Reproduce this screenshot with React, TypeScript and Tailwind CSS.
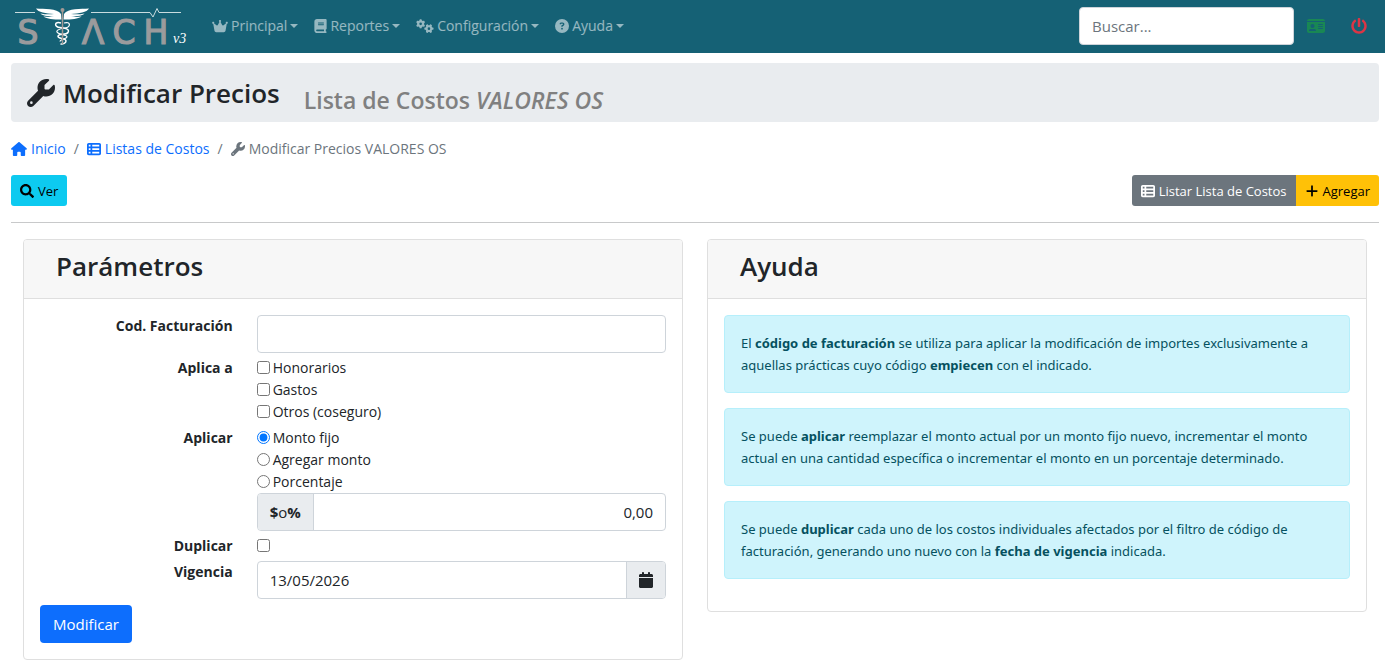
import { useState } from "react";
import type { ReactNode } from "react";
import type { IconType } from "react-icons";
import { FaPowerOff, FaSearch } from "react-icons/fa";
import {
  FaBook, FaCalendar, FaCircleQuestion, FaCrown, FaGears, FaHouse, FaIdCard,
  FaPlus, FaTableList, FaWrench,
} from "react-icons/fa6";

const navItems: { label: string; icon: IconType; size: string }[] = [
  { label: "Principal",     icon: FaCrown,          size: "h-3.5 w-4"      },
  { label: "Reportes",      icon: FaBook,           size: "h-3.5 w-[13px]" },
  { label: "Configuración", icon: FaGears,          size: "h-3.5 w-[18px]" },
  { label: "Ayuda",         icon: FaCircleQuestion, size: "h-3.5 w-3.5"    },
];

const targets = ["Honorarios", "Gastos", "Otros (coseguro)"];
const modes = ["Monto fijo", "Agregar monto", "Porcentaje"];

function Logo() {
  return (
    <svg width="176" height="53" viewBox="12 0 176 53" className="overflow-visible" role="img" aria-label="STACH v3">
      <g stroke="#c9dcdf" strokeWidth="1" fill="none">
        <path d="M15 12.500H35" />
        <path d="M91 12.500H150L153 17L157 8.500L159 12.500H181" />
      </g>
      {/* wings */}
      <g fill="#fff">
        <path d="M36 8.500C44 9 57 8 61 14L61.500 19.500C52 20 45 18 43.500 16.500C47 17 51 17 54 16.500C47 16.500 42 15.500 40.500 13.500C45 14.500 50 14.500 54 14C46 13.500 38 12.500 36 8.500Z" />
        <path d="M89 8.500C81 9 68 8 64 14L63.500 19.500C73 20 80 18 81.500 16.500C78 17 74 17 71 16.500C78 16.500 83 15.500 84.500 13.500C80 14.500 75 14.500 71 14C79 13.500 87 12.500 89 8.500Z" />
      </g>
      {/* snakes and staff */}
      <path d="M61 23C54 21 54 27 60 27.500C65 28 70 29 68 32.500C66 35.500 58 33 58 36.500C58 39 66 38 66 41C66 43 63 44.500 60.500 44" stroke="#fff" strokeWidth="1.500" fill="none" />
      <path d="M64 23C71 21 71 27 65 28C58 29 55 31 58 33C61 35 67 34.500 67 37C67 39 60 39 60 41.500" stroke="#fff" strokeWidth="1.200" fill="none" />
      <path d="M62.500 11V44" stroke="#a39a96" strokeWidth="1.500" />
      <circle cx="62.500" cy="10" r="2" fill="#a39a96" />
      <g fill="#9b9b9d" stroke="#9b9b9d" strokeWidth="1.200" fontFamily="'DejaVu Sans', sans-serif" fontSize="33" textAnchor="middle">
        <text x="28" y="44">S</text>
        <text x="93" y="44">Λ</text>
        <text x="124" y="44">C</text>
        <text x="156" y="44">H</text>
      </g>
      <text x="173" y="43" fill="#fff" fontFamily="'Liberation Serif', serif" fontSize="14" fontStyle="italic">v3</text>
    </svg>
  );
}

function Row({ label, htmlFor, children }: { label: string; htmlFor?: string; children: ReactNode }) {
  const cls = "w-1/3 shrink-0 px-3 text-right font-bold";
  return (
    <div className="-mx-3 flex">
      {htmlFor ? <label htmlFor={htmlFor} className={cls}>{label}</label> : <span className={cls}>{label}</span>}
      <div className="min-w-0 flex-1 px-3">{children}</div>
    </div>
  );
}

function Card({ title, children, className }: { title: string; children: ReactNode; className: string }) {
  return (
    <section className="min-w-0 flex-1 overflow-hidden rounded border border-[#dfdfdf] bg-white">
      <h2 className="border-b border-[#dfdfdf] bg-[#f7f7f7] pt-2 pb-3.5 pl-8 text-[26px] leading-9 font-semibold">{title}</h2>
      <div className={className}>{children}</div>
    </section>
  );
}

function Alert({ children }: { children: ReactNode }) {
  return (
    <p className="rounded border border-[#b6effb] bg-[#cff4fc] p-4 font-['Noto_Sans',sans-serif] text-[13px] leading-[22px] text-[#055160]">{children}</p>
  );
}

export default function App() {
  const [checked, setChecked] = useState<string[]>([]);
  const [mode, setMode] = useState("Monto fijo");
  const [amount, setAmount] = useState("0,00");
  const [date, setDate] = useState("13/05/2026");

  const toggle = (name: string) =>
    setChecked(prev => (prev.includes(name) ? prev.filter(n => n !== name) : [...prev, name]));

  return (
    <div className="bg-white font-['Open_Sans','Noto_Sans',sans-serif] text-[14px] leading-[22px] text-[#212529]">
      {/* Navbar */}
      <header className="flex h-[53px] items-center bg-[#156175] pr-[18px] pl-3">
        <a href="#" className="mr-4 shrink-0"><Logo /></a>
        <nav className="flex flex-1 items-center gap-4 pb-0.5 pl-2">
          {navItems.map(({ label, icon: Icon, size }) => (
            <button key={label} className="flex items-center gap-[3px] text-white/55">
              <Icon className={size} />
              <span>{label}</span>
              <span className="border-x-4 border-t-4 border-x-transparent" />
            </button>
          ))}
        </nav>
        <div className="flex items-center pb-0.5">
          <input type="search" aria-label="Buscar" placeholder="Buscar..."
            className="h-[38px] w-[215px] rounded border border-[#ced4da] bg-white px-3 text-[15px] placeholder:text-[#6c757d]" />
          <a href="#" aria-label="Credencial" className="ml-[13px] text-[#198754]"><FaIdCard size={18} /></a>
          <a href="#" aria-label="Salir" className="ml-[26px] text-[#dc3545]"><FaPowerOff size={16} /></a>
        </div>
      </header>

      <main className="pt-2.5 pr-1.5 pl-[11px]">
        <div className="flex items-end gap-6 rounded bg-[#e9ecef] px-4 pt-3 pb-2 font-semibold">
          <h1 className="flex items-center gap-2 pb-[3px] text-[26px] leading-9">
            <FaWrench size={28} />
            Modificar Precios
          </h1>
          <p className="text-[23px] leading-7 text-[#808080]">Lista de Costos <em>VALORES OS</em></p>
        </div>

        <nav aria-label="breadcrumb" className="mt-4 flex items-center gap-2">
          <a href="#" className="flex items-center gap-1 text-[#0d6efd]"><FaHouse className="h-3.5 w-4" />Inicio</a>
          <span className="text-[#6c757d]">/</span>
          <a href="#" className="flex items-center gap-1 text-[#0d6efd]"><FaTableList size={14} />Listas de Costos</a>
          <span className="text-[#6c757d]">/</span>
          <span className="flex items-center gap-1 text-[#6c757d]"><FaWrench size={14} />Modificar Precios VALORES OS</span>
        </nav>

        <div className="mt-[15px] flex justify-between text-[13px] text-black">
          <button className="flex h-[31px] items-center gap-1 rounded-[3px] bg-[#0dcaf0] px-[9px]"><FaSearch size={14} />Ver</button>
          <div className="flex">
            <button className="flex h-[31px] items-center gap-1 rounded-l-[3px] bg-[#6c757d] px-[9px] text-white"><FaTableList size={14} />Listar Lista de Costos</button>
            <button className="flex h-[31px] items-center gap-1 rounded-r-[3px] bg-[#ffc107] px-[9px]"><FaPlus size={14} />Agregar</button>
          </div>
        </div>

        <hr className="my-4 border-[#c8c9ca]" />

        <div className="flex items-start gap-6 px-3 pb-1">
          <Card title="Parámetros" className="p-4">
            <form onSubmit={e => e.preventDefault()}>
              <div className="flex flex-col gap-1">
                <Row label="Cod. Facturación" htmlFor="codigo">
                  <input id="codigo" type="text" className="block h-[38px] w-full rounded border border-[#ced4da] px-3 text-[15px]" />
                </Row>
                <Row label="Aplica a">
                  {targets.map(name => (
                    <label key={name} className="flex gap-[3px]">
                      <input type="checkbox" className="mt-1 size-[13px]" checked={checked.includes(name)} onChange={() => toggle(name)} />
                      {name}
                    </label>
                  ))}
                </Row>
                <Row label="Aplicar">
                  {modes.map(name => (
                    <label key={name} className="flex gap-[3px]">
                      <input type="radio" name="modo" className="mt-1 size-[13px]" checked={mode === name} onChange={() => setMode(name)} />
                      {name}
                    </label>
                  ))}
                  <div className="flex h-[38px] overflow-hidden rounded border border-[#ced4da] text-[15px]">
                    <label htmlFor="importe" className="flex items-center border-r border-[#ced4da] bg-[#e9ecef] px-3">
                      <b>$</b><span>o</span><b>%</b>
                    </label>
                    <input id="importe" type="text" value={amount} onChange={e => setAmount(e.target.value)}
                      className="min-w-0 flex-1 px-3 text-right" />
                  </div>
                </Row>
                <Row label="Duplicar" htmlFor="duplicar">
                  <input id="duplicar" type="checkbox" className="mt-1 block size-[13px]" />
                </Row>
                <Row label="Vigencia" htmlFor="vigencia">
                  <div className="flex h-[38px] overflow-hidden rounded border border-[#ced4da] text-[15px]">
                    <input id="vigencia" type="text" value={date} onChange={e => setDate(e.target.value)}
                      className="min-w-0 flex-1 px-3" />
                    <button type="button" aria-label="Calendario" className="border-l border-[#ced4da] bg-[#e9ecef] px-3"><FaCalendar className="h-4 w-3.5" /></button>
                  </div>
                </Row>
              </div>
              <button type="submit" className="mt-1.5 block h-[38px] rounded bg-[#0d6efd] px-[13px] text-[15px] text-white">Modificar</button>
            </form>
          </Card>

          <Card title="Ayuda" className="flex flex-col gap-[15px] px-4 pt-4 pb-8">
            <Alert>
              El <b>código de facturación</b> se utiliza para aplicar la modificación de importes exclusivamente a
              aquellas prácticas cuyo código <b>empiecen</b> con el indicado.
            </Alert>
            <Alert>
              Se puede <b>aplicar</b> reemplazar el monto actual por un monto fijo nuevo, incrementar el monto
              actual en una cantidad específica o incrementar el monto en un porcentaje determinado.
            </Alert>
            <Alert>
              Se puede <b>duplicar</b> cada uno de los costos individuales afectados por el filtro de código de
              facturación, generando uno nuevo con la <b>fecha de vigencia</b> indicada.
            </Alert>
          </Card>
        </div>
      </main>
    </div>
  );
}
